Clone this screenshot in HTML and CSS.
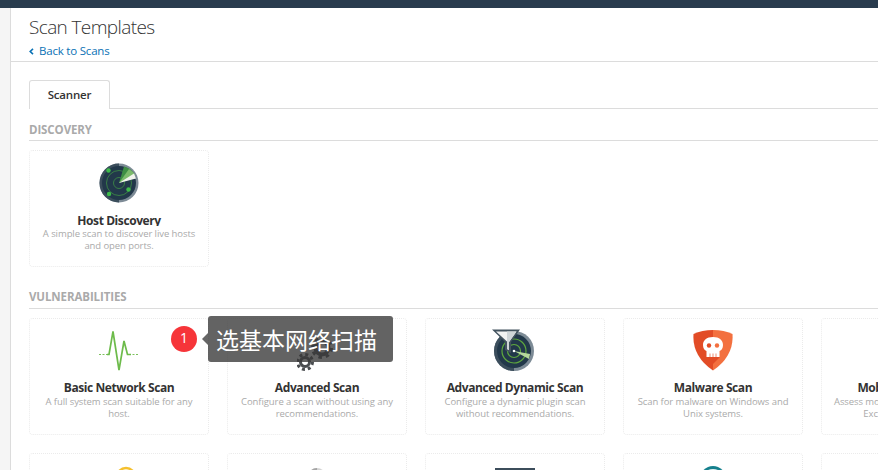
FILE: index.html
```html
<!DOCTYPE html>
<html lang="en">
<head>
<meta charset="utf-8">
<title>Scan Templates</title>
<link rel="stylesheet" href="styles.css">
</head>
<body>
<div class="topbar"></div>
<div class="shell">
  <div class="rail"></div>
  <main class="main">
    <header class="head">
      <h1 class="title">Scan Templates</h1>
      <a class="back"><svg class="chev" width="5" height="7" viewBox="0 0 5 7"><path d="M4 .8 1.200 3.500 4 6.200" fill="none" stroke="#0a72b5" stroke-width="1.600"/></svg>Back to Scans</a>
    </header>
    <div class="tabs"><div class="tab">Scanner</div></div>

    <h2 class="section first">DISCOVERY</h2>
    <div class="grid">
      <div class="card">
        <div class="icon">
          <svg width="40" height="40" viewBox="0 0 40 40"><circle cx="20" cy="20" r="19.500" fill="#7d8b96"/><path d="M20 .5a19.500 19.500 0 0 0 0 39z" fill="#3c4e5c"/><circle cx="20" cy="20" r="17" fill="#22384a"/><circle cx="20" cy="20" r="12.500" fill="none" stroke="#3f8f45" stroke-width=".8"/><circle cx="20" cy="20" r="5.500" fill="none" stroke="#3f8f45" stroke-width=".8"/><path d="M20 20 25 3.500A17 17 0 0 1 36 12z" fill="#3f8f45"/><path d="M20 20 30 6A17 17 0 0 1 36 12z" fill="#7dbb6c"/><path d="M20 20 35 10.500 37 15.500z" fill="#f2f4ee"/><circle cx="9.500" cy="7.500" r="2.200" fill="#3dbb4a"/><circle cx="29.500" cy="26.500" r="2.200" fill="#3dbb4a"/><circle cx="10" cy="31" r="2.200" fill="#3dbb4a"/></svg>
        </div>
        <div class="name host">Host Discovery</div>
        <p class="desc">A simple scan to discover live hosts and open ports.</p>
      </div>
    </div>

    <h2 class="section second">VULNERABILITIES</h2>
    <div class="grid">
      <div class="card">
        <div class="icon">
          <svg width="40" height="40" viewBox="0 0 40 40"><path d="M0 23.500H9M30 23.500H39" stroke="#7cc05c" stroke-dasharray="2 1.500" fill="none"/><path d="M8 23.500H10L14 .5 20 39 25 10 28.500 23.500H32" stroke="#6dbb4b" stroke-width="1.700" fill="none"/></svg>
        </div>
        <div class="name">Basic Network Scan</div>
        <p class="desc">A full system scan suitable for any host.</p>
      </div>
      <div class="card">
        <div class="icon">
          <svg width="40" height="40" viewBox="0 0 40 40"><g fill="none" stroke="#4a4d50"><circle cx="8" cy="31" r="4.500" stroke-width="3"/><circle cx="8" cy="31" r="7.500" stroke-width="3" stroke-dasharray="3 2.890"/><circle cx="25" cy="17" r="6.500" stroke-width="4"/><circle cx="25" cy="17" r="9.500" stroke-width="3" stroke-dasharray="3.500 3.960"/></g></svg>
        </div>
        <div class="name">Advanced Scan</div>
        <p class="desc">Configure a scan without using any recommendations.</p>
      </div>
      <div class="card">
        <div class="icon">
          <svg width="44" height="42" viewBox="0 0 44 42" class="raised shift"><circle cx="22" cy="22" r="20" fill="#7d8b96"/><path d="M22 2a20 20 0 0 0 0 40z" fill="#3c4e5c"/><circle cx="22" cy="22" r="17" fill="#22384a"/><circle cx="22" cy="22" r="12" fill="none" stroke="#5fa83e" stroke-width="1.200"/><circle cx="22" cy="22" r="6.500" fill="none" stroke="#5fa83e" stroke-width="1.200"/><path d="M22 22 38 25 37 30z" fill="#b5d79c"/><circle cx="22" cy="22" r="1.300" fill="#fff"/><path d="M0 .5H28L19 13V24L13 21V13Z" fill="#43535f"/><path d="M4 2.500H24.500L17 13V21L15 20V12.500Z" fill="#f1f2f2"/><path d="M15 2.500H24.500L17 13V21L15 20Z" fill="#cfd5d8"/></svg>
        </div>
        <div class="name">Advanced Dynamic Scan</div>
        <p class="desc">Configure a dynamic plugin scan without recommendations.</p>
      </div>
      <div class="card">
        <div class="icon">
          <svg width="40" height="42" viewBox="0 0 40 42" class="raised"><path d="M20 1Q31 1 39.500 5 41 27 20 41.500Z" fill="#f3703f"/><path d="M20 1Q9 1 .5 5-1 27 20 41.500Z" fill="#e24c26"/><path d="M20 28H27L20 35Z" fill="#e24c26"/><path d="M20 8c-6.500 0-10 3.500-10 8 0 3.500 1.500 5 3.500 6v6h13v-6c2-1 3.500-2.500 3.500-6 0-4.500-3.500-8-10-8z" fill="#fff"/><circle cx="16" cy="16.500" r="2.200" fill="#e24c26"/><circle cx="24" cy="16.500" r="2.200" fill="#f3703f"/><path d="M17 24.500V28M20 24.500V28M23 24.500V28" stroke="#e8603a" stroke-width=".7"/></svg>
        </div>
        <div class="name">Malware Scan</div>
        <p class="desc">Scan for malware on Windows and Unix systems.</p>
      </div>
      <div class="card">
        <div class="icon"></div>
        <div class="name">Mobile Device Scan</div>
        <p class="desc">Assess mobile devices via Microsoft Exchange or an MDM.</p>
      </div>
    </div>

    <div class="grid next">
      <div class="card"><div class="icon"><svg class="bulb" width="20" height="24" viewBox="0 0 20 24"><circle cx="10" cy="11" r="9" fill="none" stroke="#f5c02e" stroke-width="2.500"/></svg></div></div>
      <div class="card"><div class="icon"><svg width="18" height="24" viewBox="0 0 18 24"><circle cx="9" cy="11" r="9" fill="#d4d4d4"/><path d="M9 2a9 9 0 0 0-8 5h8z" fill="#a5a5a5"/></svg></div></div>
      <div class="card"><div class="icon"><svg class="screen" width="40" height="24" viewBox="0 0 40 24"><rect width="40" height="24" fill="#3c4d5b"/></svg></div></div>
      <div class="card"><div class="icon"><svg width="26" height="24" viewBox="0 0 26 24"><circle cx="13" cy="13" r="13" fill="#15808d"/><circle cx="13" cy="15" r="12" fill="#e9f3f4"/></svg></div></div>
      <div class="card"></div>
    </div>
  </main>
</div>

<div class="tip-badge">1</div>
<div class="tip">选基本网络扫描</div>
</body>
</html>
```
FILE: styles.css
```css
* { box-sizing: border-box; }
html, body { margin: 0; height: 100%; overflow: hidden; background: #fff; }
body { font-family: "Open Sans", "Noto Sans CJK SC", sans-serif; color: #333; }

.topbar { height: 8px; background: #293c4e; }
.shell { display: flex; height: 462px; }
.rail { width: 11px; flex: none; background: #f5f5f5; border-right: 1px solid #dcdcdc; }
.main { flex: 1; min-width: 0; padding-left: 18px; overflow: hidden; }

.head { height: 54px; margin-left: -18px; padding-left: 18px; border-bottom: 1px solid #dcdcdc; }
.title { margin: 0; padding-top: 7px; font-size: 19px; font-weight: 300; line-height: 24px; color: #333; letter-spacing: -.62px; }
.back { display: flex; align-items: center; gap: 5px; margin-top: 4px; font-size: 11.5px; line-height: 16px; color: #0a72b5; letter-spacing: -.2px; }

.tabs { margin-top: 18px; height: 29px; border-bottom: 1px solid #dcdcdc; }
.tab { width: 81px; height: 29px; border: 1px solid #dcdcdc; border-bottom: 0; border-radius: 3px 3px 0 0; background: #fff; text-align: center; font-size: 11.5px; font-weight: 600; line-height: 28px; color: #333; letter-spacing: -.2px; }

.section { height: 24px; margin: 0; padding-top: 5px; font-size: 11.5px; font-weight: 700; line-height: 16px; color: #aaa; border-bottom: 1px solid #dcdcdc; letter-spacing: -.1px; }
.section.first { margin-top: 8px; }
.section.second { margin-top: 18px; padding-top: 4px; }

.grid { display: flex; gap: 18px; margin-top: 9px; }
.grid.next { margin-top: 18px; }
.card { width: 180px; height: 117px; flex: none; padding: 0 10px; border: 1px dotted #ebebeb; border-radius: 4px; background: #fff; text-align: center; }
.icon { height: 45px; margin-top: 12px; display: flex; justify-content: center; align-items: flex-start; }
.raised { margin-top: -2px; }
.shift { margin-left: -2px; }
.bulb { margin-left: 13px; }
.screen { margin-top: 2px; }
.name { margin-top: 4px; height: 16px; overflow: hidden; font-size: 12px; font-weight: 700; line-height: 16px; color: #333; letter-spacing: -.42px; white-space: nowrap; }
.name.host { margin-top: 5px; height: 13px; margin-bottom: 2px; }
.desc { margin: 0; font-size: 9.5px; line-height: 12px; color: #aaa; letter-spacing: -.08px; }

.tip { position: absolute; left: 208px; top: 316px; width: 185px; height: 46px; border-radius: 3px; background: rgba(56, 56, 56, .785); color: #fff; font-family: "Noto Sans CJK SC", sans-serif; font-size: 23px; line-height: 46px; padding-left: 8px; white-space: nowrap; }
.tip::before { content: ""; position: absolute; left: -6px; top: 17px; border: 6px solid transparent; border-left: 0; border-right-color: #666; }
.tip-badge { position: absolute; left: 171px; top: 326px; width: 26px; height: 26px; border-radius: 50%; background: #f63539; color: #fff; font-size: 14px; line-height: 24px; text-align: center; }
```
